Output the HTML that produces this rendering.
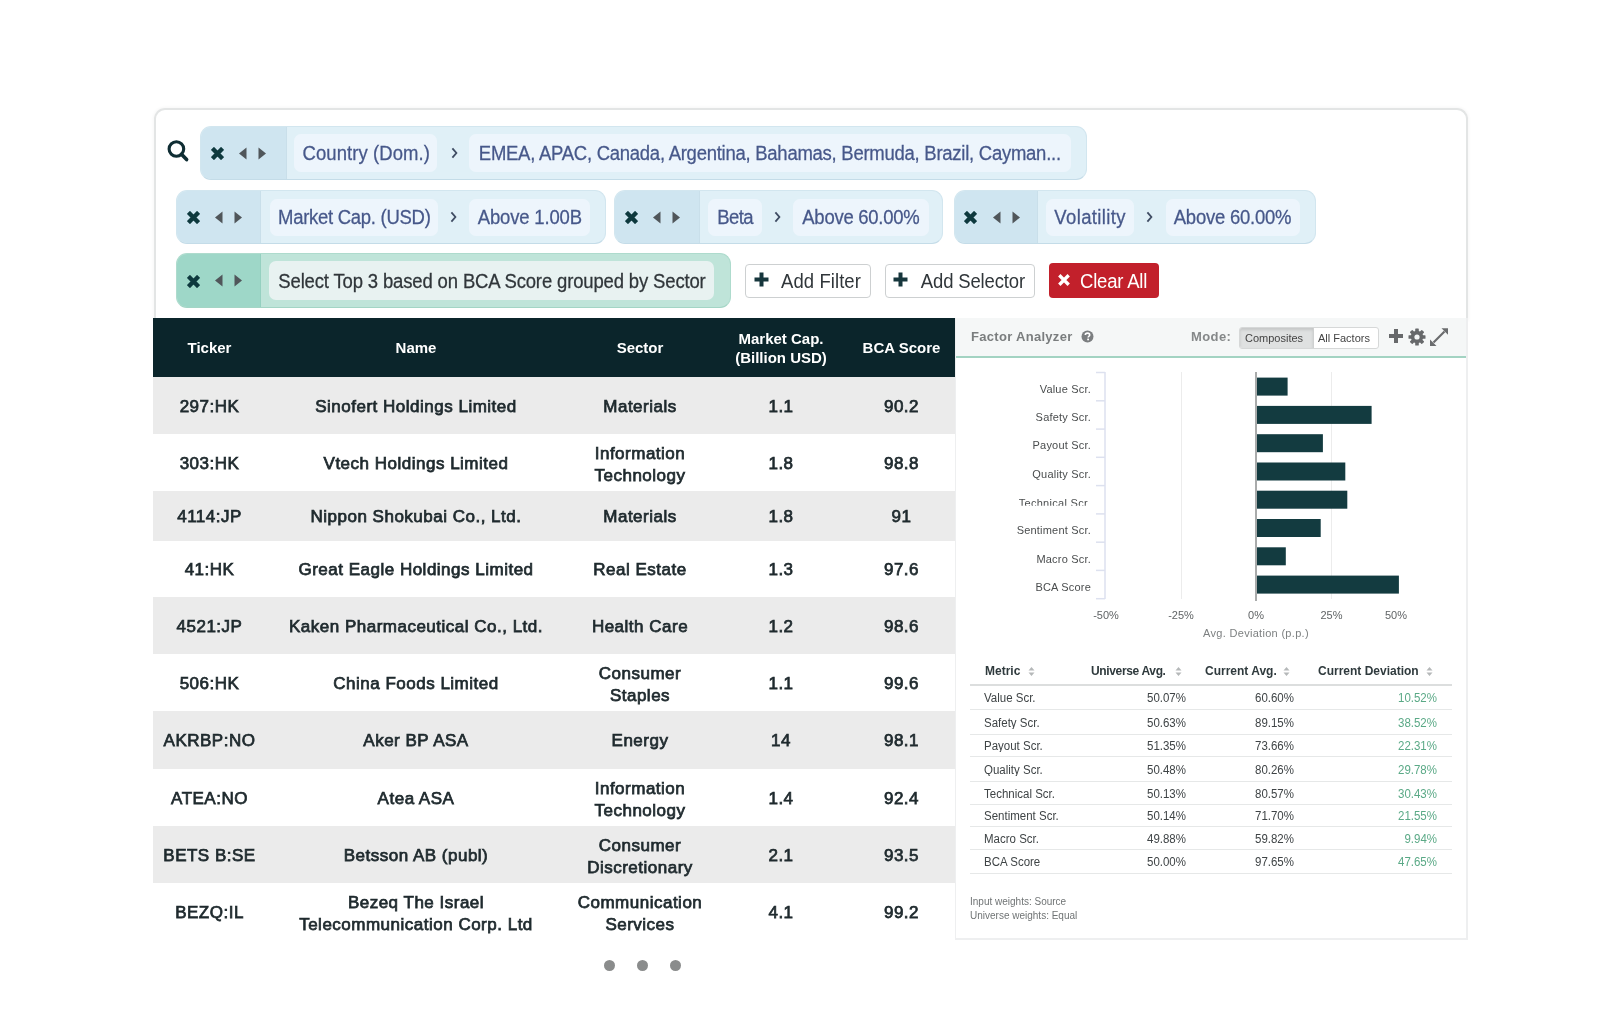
<!DOCTYPE html>
<html><head><meta charset="utf-8">
<style>
*{margin:0;padding:0;box-sizing:border-box}
html,body{width:1600px;height:1011px;overflow:hidden;background:#fff}
body{position:relative;font-family:"Liberation Sans",sans-serif}
.abs{position:absolute}
.t{position:absolute;white-space:nowrap}
.card{position:absolute;left:154px;top:108px;width:1314px;height:212px;border:2px solid #e3e5e5;border-bottom:none;border-radius:11px 11px 0 0;box-shadow:0 0 3px 1px rgba(0,0,0,0.035)}
.chip{position:absolute;border-radius:11px;background:#e0f0f7;border:1px solid #d2e6ef;border-bottom-color:#c4dce8;overflow:hidden}
.dk{position:absolute;left:0;top:0;bottom:0;background:#cfe5f0;border-right:1px solid #c9dfea}
.g{background:#bfe4d9;border-color:#aedbcd;border-bottom-color:#a3d5c5}
.g .dk{background:#9ed7c8;border-right-color:#95d0c0}
.box{position:absolute;background:#ebf4fc;border-radius:7px}
.g .box{background:#e7f3f0}
.ct{position:absolute;white-space:nowrap;color:#47588a;font-size:18.5px;line-height:20px;-webkit-text-stroke:0.25px currentColor;transform:scaleY(1.07);transform-origin:0 50%}
.sy{transform:scaleY(1.07);transform-origin:0 50%}
.mr span{transform:scaleY(1.15);transform-origin:0 50%;top:-1px}
.btn{position:absolute;top:264px;height:34px;border:1.5px solid #cdd0d1;border-radius:4px;background:#fff}
.hdr{position:absolute;left:153px;top:318px;width:802px;height:59px;background:#0b252b;color:#fff;font-weight:bold;font-size:15px}
.row{position:absolute;left:153px;width:802px;color:#1f2a2e;font-weight:normal;font-size:17px;letter-spacing:0.5px;-webkit-text-stroke:0.75px #1f2a2e}
.gr{background:#ebebeb}
.c{position:absolute;text-align:center;top:0;height:100%;display:flex;align-items:center;justify-content:center;line-height:22px;padding-top:2px}
.c2l{padding-top:4px}
.hdr .c{padding-top:0;line-height:21px}
.c1{left:0;width:113px}.c2{left:113px;width:300px}.c3{left:413px;width:148px}.c4{left:561px;width:134px}.c5{left:695px;width:107px}
.panel{position:absolute;left:955px;top:318px;width:513px;height:622px;border:2px solid #eeeff0;border-top:none;border-left-width:1.5px;background:#fff}
.ph{position:absolute;left:0;top:0;width:100%;height:40px;background:#f5f7f7;border-bottom:2px solid #a3d3c2}
.dot{position:absolute;top:960px;width:11px;height:11px;border-radius:50%;background:#8a8c8c}
#wrap{position:absolute;left:0;top:0;width:1600px;height:1011px;background:#fff;filter:blur(0.5px)}</style></head><body><div id="wrap">
<div class="card"></div>
<svg class="abs" style="left:165px;top:138px" width="26" height="26" viewBox="0 0 26 26"><circle cx="11.4" cy="11" r="7.3" fill="none" stroke="#0f2d33" stroke-width="3.1"/><line x1="16.5" y1="16.2" x2="21.6" y2="21.6" stroke="#0f2d33" stroke-width="3.6" stroke-linecap="round"/></svg>
<div class="chip" style="left:200px;top:126px;width:887px;height:54px"><div class="dk" style="width:86px"></div></div>
<svg class="abs" style="left:210.5px;top:147.0px" width="13" height="13" viewBox="0 0 13 13"><path d="M1.4 1.4L11.6 11.6M11.6 1.4L1.4 11.6" stroke="#0e393e" stroke-width="4.4" stroke-linecap="butt"/></svg>
<svg class="abs" style="left:238px;top:146.5px" width="9" height="13" viewBox="0 0 9 13"><path d="M8.5 0.5V12.5L1 6.5Z" fill="#50565a"/></svg>
<svg class="abs" style="left:258px;top:146.5px" width="9" height="13" viewBox="0 0 9 13"><path d="M0.5 0.5V12.5L8 6.5Z" fill="#50565a"/></svg>
<div class="box" style="left:294px;top:134px;width:143px;height:38px;background:#edf5fc"></div>
<div class="ct" style="left:302.5px;top:144.0px;letter-spacing:0.08px;color:#47588a">Country (Dom.)</div>
<div class="box" style="left:469px;top:134px;width:602px;height:38px;background:#edf5fc"></div>
<div class="ct" style="left:478.8px;top:144.0px;letter-spacing:-0.26px;color:#47588a">EMEA, APAC, Canada, Argentina, Bahamas, Bermuda, Brazil, Cayman...</div>
<svg class="abs" style="left:450.5px;top:147.0px" width="8" height="12" viewBox="0 0 8 12"><path d="M1.4 1.4L5.4 6L1.4 10.6" fill="none" stroke="#3f4c63" stroke-width="1.8"/></svg>
<div class="chip" style="left:176px;top:190px;width:430px;height:54px"><div class="dk" style="width:84px"></div></div>
<svg class="abs" style="left:186.5px;top:211.0px" width="13" height="13" viewBox="0 0 13 13"><path d="M1.4 1.4L11.6 11.6M11.6 1.4L1.4 11.6" stroke="#0e393e" stroke-width="4.4" stroke-linecap="butt"/></svg>
<svg class="abs" style="left:214px;top:210.5px" width="9" height="13" viewBox="0 0 9 13"><path d="M8.5 0.5V12.5L1 6.5Z" fill="#50565a"/></svg>
<svg class="abs" style="left:234px;top:210.5px" width="9" height="13" viewBox="0 0 9 13"><path d="M0.5 0.5V12.5L8 6.5Z" fill="#50565a"/></svg>
<div class="box" style="left:269.5px;top:199px;width:168.0px;height:37px;background:#edf5fc"></div>
<div class="ct" style="left:278px;top:208.0px;letter-spacing:-0.28px;color:#47588a">Market Cap. (USD)</div>
<div class="box" style="left:468.5px;top:199px;width:121.5px;height:37px;background:#edf5fc"></div>
<div class="ct" style="left:477.8px;top:208.0px;letter-spacing:-0.17px;color:#47588a">Above 1.00B</div>
<svg class="abs" style="left:450px;top:211.0px" width="8" height="12" viewBox="0 0 8 12"><path d="M1.4 1.4L5.4 6L1.4 10.6" fill="none" stroke="#3f4c63" stroke-width="1.8"/></svg>
<div class="chip" style="left:614px;top:190px;width:329px;height:54px"><div class="dk" style="width:85px"></div></div>
<svg class="abs" style="left:624.5px;top:211.0px" width="13" height="13" viewBox="0 0 13 13"><path d="M1.4 1.4L11.6 11.6M11.6 1.4L1.4 11.6" stroke="#0e393e" stroke-width="4.4" stroke-linecap="butt"/></svg>
<svg class="abs" style="left:652px;top:210.5px" width="9" height="13" viewBox="0 0 9 13"><path d="M8.5 0.5V12.5L1 6.5Z" fill="#50565a"/></svg>
<svg class="abs" style="left:672px;top:210.5px" width="9" height="13" viewBox="0 0 9 13"><path d="M0.5 0.5V12.5L8 6.5Z" fill="#50565a"/></svg>
<div class="box" style="left:708px;top:199px;width:54px;height:37px;background:#edf5fc"></div>
<div class="ct" style="left:717.3px;top:208.0px;letter-spacing:-0.6px;color:#47588a">Beta</div>
<div class="box" style="left:792.5px;top:199px;width:136.5px;height:37px;background:#edf5fc"></div>
<div class="ct" style="left:802.3px;top:208.0px;letter-spacing:-0.27px;color:#47588a">Above 60.00%</div>
<svg class="abs" style="left:773.5px;top:211.0px" width="8" height="12" viewBox="0 0 8 12"><path d="M1.4 1.4L5.4 6L1.4 10.6" fill="none" stroke="#3f4c63" stroke-width="1.8"/></svg>
<div class="chip" style="left:953.5px;top:190px;width:362.5px;height:54px"><div class="dk" style="width:83.0px"></div></div>
<svg class="abs" style="left:964.0px;top:211.0px" width="13" height="13" viewBox="0 0 13 13"><path d="M1.4 1.4L11.6 11.6M11.6 1.4L1.4 11.6" stroke="#0e393e" stroke-width="4.4" stroke-linecap="butt"/></svg>
<svg class="abs" style="left:991.5px;top:210.5px" width="9" height="13" viewBox="0 0 9 13"><path d="M8.5 0.5V12.5L1 6.5Z" fill="#50565a"/></svg>
<svg class="abs" style="left:1011.5px;top:210.5px" width="9" height="13" viewBox="0 0 9 13"><path d="M0.5 0.5V12.5L8 6.5Z" fill="#50565a"/></svg>
<div class="box" style="left:1046px;top:199px;width:88px;height:37px;background:#edf5fc"></div>
<div class="ct" style="left:1054.3px;top:208.0px;letter-spacing:0.38px;color:#47588a">Volatility</div>
<div class="box" style="left:1166px;top:199px;width:134px;height:37px;background:#edf5fc"></div>
<div class="ct" style="left:1173.75px;top:208.0px;letter-spacing:-0.23px;color:#47588a">Above 60.00%</div>
<svg class="abs" style="left:1145.5px;top:211.0px" width="8" height="12" viewBox="0 0 8 12"><path d="M1.4 1.4L5.4 6L1.4 10.6" fill="none" stroke="#3f4c63" stroke-width="1.8"/></svg>
<div class="chip g" style="left:176px;top:253px;width:555px;height:55px"><div class="dk" style="width:84px"></div></div>
<svg class="abs" style="left:186.5px;top:274.5px" width="13" height="13" viewBox="0 0 13 13"><path d="M1.4 1.4L11.6 11.6M11.6 1.4L1.4 11.6" stroke="#0e393e" stroke-width="4.4" stroke-linecap="butt"/></svg>
<svg class="abs" style="left:214px;top:274.0px" width="9" height="13" viewBox="0 0 9 13"><path d="M8.5 0.5V12.5L1 6.5Z" fill="#50565a"/></svg>
<svg class="abs" style="left:234px;top:274.0px" width="9" height="13" viewBox="0 0 9 13"><path d="M0.5 0.5V12.5L8 6.5Z" fill="#50565a"/></svg>
<div class="box" style="left:269px;top:261px;width:445px;height:39px;background:#e8f2f1"></div>
<div class="ct" style="left:278.3px;top:271.5px;letter-spacing:-0.15px;color:#30363a">Select Top 3 based on BCA Score grouped by Sector</div>
<div class="btn" style="left:745px;width:126px"></div>
<svg class="abs" style="left:754px;top:272px" width="15" height="15" viewBox="0 0 15 15"><path d="M7.5 0.5V14.5M0.5 7.5H14.5" stroke="#16363c" stroke-width="4"/></svg>
<div class="t sy" style="left:781px;top:272px;font-size:18.5px;line-height:20px;color:#30363a;letter-spacing:0.08px">Add Filter</div>
<div class="btn" style="left:884.5px;width:150px"></div>
<svg class="abs" style="left:893px;top:272px" width="15" height="15" viewBox="0 0 15 15"><path d="M7.5 0.5V14.5M0.5 7.5H14.5" stroke="#16363c" stroke-width="4"/></svg>
<div class="t sy" style="left:920.8px;top:272px;font-size:18.5px;line-height:20px;color:#30363a;letter-spacing:-0.15px">Add Selector</div>
<div class="abs" style="left:1049px;top:263px;width:110px;height:35px;background:#c2202b;border-radius:4px"></div>
<svg class="abs" style="left:1058px;top:274px" width="12" height="12" viewBox="0 0 13 13"><path d="M1.4 1.4L11.6 11.6M11.6 1.4L1.4 11.6" stroke="#fff" stroke-width="3.6" stroke-linecap="butt"/></svg>
<div class="t sy" style="left:1080px;top:272px;font-size:18.5px;line-height:20px;color:#fff;letter-spacing:-0.2px">Clear All</div>
<div class="hdr"><div class="c c1">Ticker</div><div class="c c2">Name</div><div class="c c3">Sector</div><div class="c c4" style="line-height:19px">Market Cap.<br>(Billion USD)</div><div class="c c5">BCA Score</div></div>
<div class="row gr" style="top:377px;height:57px"><div class="c c1">297:HK</div><div class="c c2">Sinofert Holdings Limited</div><div class="c c3">Materials</div><div class="c c4">1.1</div><div class="c c5">90.2</div></div>
<div class="row" style="top:434px;height:57px"><div class="c c1">303:HK</div><div class="c c2">Vtech Holdings Limited</div><div class="c c3 c2l">Information<br>Technology</div><div class="c c4">1.8</div><div class="c c5">98.8</div></div>
<div class="row gr" style="top:491px;height:50px"><div class="c c1">4114:JP</div><div class="c c2">Nippon Shokubai Co., Ltd.</div><div class="c c3">Materials</div><div class="c c4">1.8</div><div class="c c5">91</div></div>
<div class="row" style="top:541px;height:56px"><div class="c c1">41:HK</div><div class="c c2">Great Eagle Holdings Limited</div><div class="c c3">Real Estate</div><div class="c c4">1.3</div><div class="c c5">97.6</div></div>
<div class="row gr" style="top:597px;height:57px"><div class="c c1">4521:JP</div><div class="c c2">Kaken Pharmaceutical Co., Ltd.</div><div class="c c3">Health Care</div><div class="c c4">1.2</div><div class="c c5">98.6</div></div>
<div class="row" style="top:654px;height:57px"><div class="c c1">506:HK</div><div class="c c2">China Foods Limited</div><div class="c c3 c2l">Consumer<br>Staples</div><div class="c c4">1.1</div><div class="c c5">99.6</div></div>
<div class="row gr" style="top:711px;height:58px"><div class="c c1">AKRBP:NO</div><div class="c c2">Aker BP ASA</div><div class="c c3">Energy</div><div class="c c4">14</div><div class="c c5">98.1</div></div>
<div class="row" style="top:769px;height:57px"><div class="c c1">ATEA:NO</div><div class="c c2">Atea ASA</div><div class="c c3 c2l">Information<br>Technology</div><div class="c c4">1.4</div><div class="c c5">92.4</div></div>
<div class="row gr" style="top:826px;height:57px"><div class="c c1">BETS B:SE</div><div class="c c2">Betsson AB (publ)</div><div class="c c3 c2l">Consumer<br>Discretionary</div><div class="c c4">2.1</div><div class="c c5">93.5</div></div>
<div class="row" style="top:883px;height:57px"><div class="c c1">BEZQ:IL</div><div class="c c2 c2l">Bezeq The Israel<br>Telecommunication Corp. Ltd</div><div class="c c3 c2l">Communication<br>Services</div><div class="c c4">4.1</div><div class="c c5">99.2</div></div>
<div class="panel"><div class="ph"></div></div>
<div class="t" style="left:971px;top:328px;font-size:13px;font-weight:bold;color:#7a7d7e;line-height:18px;letter-spacing:0.3px">Factor Analyzer</div>
<svg class="abs" style="left:1081px;top:330px" width="13" height="13" viewBox="0 0 13 13"><circle cx="6.5" cy="6.5" r="6" fill="#7b7e80"/><path d="M4.3 5.1C4.3 3.8 5.3 3.1 6.5 3.1C7.8 3.1 8.7 3.9 8.7 4.9C8.7 6.2 7.1 6.3 7.1 7.6" fill="none" stroke="#fff" stroke-width="1.6"/><rect x="6.2" y="8.6" width="1.8" height="1.7" fill="#fff"/></svg>
<div class="t" style="left:1191px;top:328px;font-size:13px;font-weight:bold;color:#858889;line-height:18px;letter-spacing:0.4px">Mode:</div>
<div class="abs" style="left:1239px;top:327px;width:140px;height:22px;border:1px solid #d6d8d8;border-radius:3px;background:#fff;overflow:hidden"><div class="abs" style="left:0;top:0;width:74px;height:20px;background:#dfe1e1;box-shadow:inset 0 2px 3px rgba(0,0,0,0.12);border-right:1px solid #cfd1d1"></div><div class="t" style="left:5px;top:0;font-size:11px;line-height:21px;color:#444">Composites</div><div class="t" style="left:78px;top:0;font-size:11px;line-height:21px;color:#444">All Factors</div></div>
<svg class="abs" style="left:1388px;top:328px" width="16" height="16" viewBox="0 0 16 16"><path d="M8 1V15M1 8H15" stroke="#67696b" stroke-width="4"/></svg>
<svg class="abs" style="left:1408px;top:328px" width="18" height="18" viewBox="0 0 18 18"><g fill="#67696b"><circle cx="9" cy="9" r="6.2"/><rect x="7.2" y="0.5" width="3.6" height="17" rx="0.6"/><rect x="7.2" y="0.5" width="3.6" height="17" rx="0.6" transform="rotate(45 9 9)"/><rect x="7.2" y="0.5" width="3.6" height="17" rx="0.6" transform="rotate(90 9 9)"/><rect x="7.2" y="0.5" width="3.6" height="17" rx="0.6" transform="rotate(135 9 9)"/></g><circle cx="9" cy="9" r="2.6" fill="#f5f7f7"/></svg>
<svg class="abs" style="left:1429px;top:327px" width="20" height="20" viewBox="0 0 20 20"><g fill="#6a6c6e"><path d="M12.5 1.2H19V7.7Z"/><path d="M1 19V12.5L7.5 19Z"/></g><path d="M4.5 15.5L15.5 4.5" stroke="#6a6c6e" stroke-width="2.2"/></svg>
<svg class="abs" style="left:955px;top:360px" width="512" height="290" viewBox="955 360 512 290"><defs><clipPath id="cl"><rect x="955" y="360" width="200" height="145.8"/></clipPath></defs><line x1="1181.5" y1="372" x2="1181.5" y2="599" stroke="#ececec" stroke-width="1"/><line x1="1331.5" y1="372" x2="1331.5" y2="599" stroke="#ececec" stroke-width="1"/><line x1="1096" y1="372.5" x2="1105" y2="372.5" stroke="#dde1ef" stroke-width="1.5"/><line x1="1096" y1="400.8" x2="1105" y2="400.8" stroke="#dde1ef" stroke-width="1.5"/><line x1="1096" y1="429.1" x2="1105" y2="429.1" stroke="#dde1ef" stroke-width="1.5"/><line x1="1096" y1="457.3" x2="1105" y2="457.3" stroke="#dde1ef" stroke-width="1.5"/><line x1="1096" y1="485.6" x2="1105" y2="485.6" stroke="#dde1ef" stroke-width="1.5"/><line x1="1096" y1="513.9" x2="1105" y2="513.9" stroke="#dde1ef" stroke-width="1.5"/><line x1="1096" y1="542.2" x2="1105" y2="542.2" stroke="#dde1ef" stroke-width="1.5"/><line x1="1096" y1="570.4" x2="1105" y2="570.4" stroke="#dde1ef" stroke-width="1.5"/><line x1="1096" y1="598.7" x2="1105" y2="598.7" stroke="#dde1ef" stroke-width="1.5"/><line x1="1105" y1="372" x2="1105" y2="599" stroke="#dde1ef" stroke-width="1.5"/><rect x="1256" y="377.6" width="31.6" height="18" fill="#133b40"/><text x="1091" y="392.8" text-anchor="end" font-family="Liberation Sans" font-size="11" letter-spacing="0.2" fill="#4a4d4e">Value Scr.</text><rect x="1256" y="405.9" width="115.6" height="18" fill="#133b40"/><text x="1091" y="421.1" text-anchor="end" font-family="Liberation Sans" font-size="11" letter-spacing="0.2" fill="#4a4d4e">Safety Scr.</text><rect x="1256" y="434.2" width="66.9" height="18" fill="#133b40"/><text x="1091" y="449.4" text-anchor="end" font-family="Liberation Sans" font-size="11" letter-spacing="0.2" fill="#4a4d4e">Payout Scr.</text><rect x="1256" y="462.5" width="89.3" height="18" fill="#133b40"/><text x="1091" y="477.7" text-anchor="end" font-family="Liberation Sans" font-size="11" letter-spacing="0.2" fill="#4a4d4e">Quality Scr.</text><rect x="1256" y="490.7" width="91.3" height="18" fill="#133b40"/><text x="1088" y="507.3" text-anchor="end" font-family="Liberation Sans" font-size="11" letter-spacing="0.3" fill="#4a4d4e" clip-path="url(#cl)">Technical Scr</text><rect x="1256" y="519.0" width="64.7" height="18" fill="#133b40"/><text x="1091" y="534.2" text-anchor="end" font-family="Liberation Sans" font-size="11" letter-spacing="0.2" fill="#4a4d4e">Sentiment Scr.</text><rect x="1256" y="547.3" width="29.8" height="18" fill="#133b40"/><text x="1091" y="562.5" text-anchor="end" font-family="Liberation Sans" font-size="11" letter-spacing="0.2" fill="#4a4d4e">Macro Scr.</text><rect x="1256" y="575.6" width="142.9" height="18" fill="#133b40"/><text x="1091" y="590.8" text-anchor="end" font-family="Liberation Sans" font-size="11" letter-spacing="0.2" fill="#4a4d4e">BCA Score</text><line x1="1256" y1="372" x2="1256" y2="601" stroke="#a9abab" stroke-width="2"/><text x="1106" y="619" text-anchor="middle" font-family="Liberation Sans" font-size="11" fill="#606466">-50%</text><text x="1181" y="619" text-anchor="middle" font-family="Liberation Sans" font-size="11" fill="#606466">-25%</text><text x="1256" y="619" text-anchor="middle" font-family="Liberation Sans" font-size="11" fill="#606466">0%</text><text x="1331.5" y="619" text-anchor="middle" font-family="Liberation Sans" font-size="11" fill="#606466">25%</text><text x="1396" y="619" text-anchor="middle" font-family="Liberation Sans" font-size="11" fill="#606466">50%</text><text x="1256" y="637" text-anchor="middle" font-family="Liberation Sans" font-size="11" letter-spacing="0.3" fill="#7d8081">Avg. Deviation (p.p.)</text></svg>
<div class="t" style="left:985px;top:664px;font-size:12px;font-weight:bold;color:#2f3a3d;line-height:14px">Metric</div><svg class="abs" style="left:1028px;top:666px" width="7" height="11" viewBox="0 0 7 11"><path d="M0.5 4.5L3.5 1L6.5 4.5ZM0.5 6.5L3.5 10L6.5 6.5Z" fill="#b5b8b9"/></svg>
<div class="t" style="left:1091px;top:664px;font-size:12px;font-weight:bold;color:#2f3a3d;line-height:14px;letter-spacing:-0.35px">Universe Avg.</div><svg class="abs" style="left:1175px;top:666px" width="7" height="11" viewBox="0 0 7 11"><path d="M0.5 4.5L3.5 1L6.5 4.5ZM0.5 6.5L3.5 10L6.5 6.5Z" fill="#b5b8b9"/></svg>
<div class="t" style="left:1205px;top:664px;font-size:12px;font-weight:bold;color:#2f3a3d;line-height:14px">Current Avg.</div><svg class="abs" style="left:1283px;top:666px" width="7" height="11" viewBox="0 0 7 11"><path d="M0.5 4.5L3.5 1L6.5 4.5ZM0.5 6.5L3.5 10L6.5 6.5Z" fill="#b5b8b9"/></svg>
<div class="t" style="left:1318px;top:664px;font-size:12px;font-weight:bold;color:#2f3a3d;line-height:14px">Current Deviation</div><svg class="abs" style="left:1426px;top:666px" width="7" height="11" viewBox="0 0 7 11"><path d="M0.5 4.5L3.5 1L6.5 4.5ZM0.5 6.5L3.5 10L6.5 6.5Z" fill="#b5b8b9"/></svg>
<div class="abs" style="left:970px;top:684px;width:482px;height:2px;background:#dcdede"></div>
<div class="abs mr" style="left:970px;top:686.0px;width:482px;height:24.0px;border-bottom:1px solid #e6e8e8;font-size:11.5px;color:#3f4446;line-height:24.0px;white-space:nowrap"><span class="abs" style="left:14px">Value Scr.</span><span class="abs" style="right:266px">50.07%</span><span class="abs" style="right:158px">60.60%</span><span class="abs" style="right:15px;color:#5aa986">10.52%</span></div>
<div class="abs mr" style="left:970px;top:711.0px;width:482px;height:24.0px;border-bottom:1px solid #e6e8e8;font-size:11.5px;color:#3f4446;line-height:24.0px;white-space:nowrap"><span class="abs" style="left:14px">Safety Scr.</span><span class="abs" style="right:266px">50.63%</span><span class="abs" style="right:158px">89.15%</span><span class="abs" style="right:15px;color:#5aa986">38.52%</span></div>
<div class="abs mr" style="left:970px;top:736.0px;width:482px;height:21.0px;border-bottom:1px solid #e6e8e8;font-size:11.5px;color:#3f4446;line-height:21.0px;white-space:nowrap"><span class="abs" style="left:14px">Payout Scr.</span><span class="abs" style="right:266px">51.35%</span><span class="abs" style="right:158px">73.66%</span><span class="abs" style="right:15px;color:#5aa986">22.31%</span></div>
<div class="abs mr" style="left:970px;top:758.0px;width:482px;height:24.0px;border-bottom:1px solid #e6e8e8;font-size:11.5px;color:#3f4446;line-height:24.0px;white-space:nowrap"><span class="abs" style="left:14px">Quality Scr.</span><span class="abs" style="right:266px">50.48%</span><span class="abs" style="right:158px">80.26%</span><span class="abs" style="right:15px;color:#5aa986">29.78%</span></div>
<div class="abs mr" style="left:970px;top:783.0px;width:482px;height:22.0px;border-bottom:1px solid #e6e8e8;font-size:11.5px;color:#3f4446;line-height:22.0px;white-space:nowrap"><span class="abs" style="left:14px">Technical Scr.</span><span class="abs" style="right:266px">50.13%</span><span class="abs" style="right:158px">80.57%</span><span class="abs" style="right:15px;color:#5aa986">30.43%</span></div>
<div class="abs mr" style="left:970px;top:806.0px;width:482px;height:21.0px;border-bottom:1px solid #e6e8e8;font-size:11.5px;color:#3f4446;line-height:21.0px;white-space:nowrap"><span class="abs" style="left:14px">Sentiment Scr.</span><span class="abs" style="right:266px">50.14%</span><span class="abs" style="right:158px">71.70%</span><span class="abs" style="right:15px;color:#5aa986">21.55%</span></div>
<div class="abs mr" style="left:970px;top:828.0px;width:482px;height:22.0px;border-bottom:1px solid #e6e8e8;font-size:11.5px;color:#3f4446;line-height:22.0px;white-space:nowrap"><span class="abs" style="left:14px">Macro Scr.</span><span class="abs" style="right:266px">49.88%</span><span class="abs" style="right:158px">59.82%</span><span class="abs" style="right:15px;color:#5aa986">9.94%</span></div>
<div class="abs mr" style="left:970px;top:851.0px;width:482px;height:23.0px;border-bottom:1px solid #e6e8e8;font-size:11.5px;color:#3f4446;line-height:23.0px;white-space:nowrap"><span class="abs" style="left:14px">BCA Score</span><span class="abs" style="right:266px">50.00%</span><span class="abs" style="right:158px">97.65%</span><span class="abs" style="right:15px;color:#5aa986">47.65%</span></div>
<div class="t" style="left:970px;top:895px;font-size:10px;color:#707475;line-height:13.5px">Input weights: Source<br>Universe weights: Equal</div>
<div class="dot" style="left:604px"></div>
<div class="dot" style="left:637px"></div>
<div class="dot" style="left:670px"></div>
</div></body></html>
